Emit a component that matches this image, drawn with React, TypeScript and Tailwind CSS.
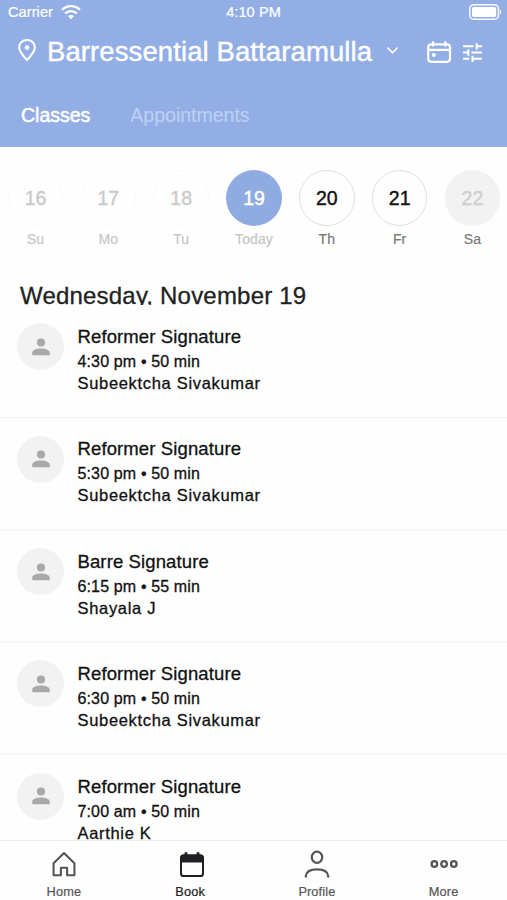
import React from "react";
import { MdTune } from "react-icons/md";

type Day = { num: string; label: string; circle: string; text: string };

const days: Day[] = [
  { num: "16", label: "Su", circle: "border border-[#fafafa] text-[#c9c9c9]", text: "text-[#c6c6c6]" },
  { num: "17", label: "Mo", circle: "border border-[#fafafa] text-[#c9c9c9]", text: "text-[#c6c6c6]" },
  { num: "18", label: "Tu", circle: "border border-[#fafafa] text-[#c9c9c9]", text: "text-[#c6c6c6]" },
  { num: "19", label: "Today", circle: "bg-[#8fabe2] text-white", text: "text-[#c6c6c6]" },
  { num: "20", label: "Th", circle: "border border-[#dedde6] text-[#111]", text: "text-[#777]" },
  { num: "21", label: "Fr", circle: "border border-[#dedde6] text-[#111]", text: "text-[#777]" },
  { num: "22", label: "Sa", circle: "bg-[#f2f2f2] text-[#cfcfcf]", text: "text-[#777]" },
];

const classes = [
  { name: "Reformer Signature", time: "4:30 pm • 50 min", who: "Subeektcha Sivakumar" },
  { name: "Reformer Signature", time: "5:30 pm • 50 min", who: "Subeektcha Sivakumar" },
  { name: "Barre Signature", time: "6:15 pm • 55 min", who: "Shayala J" },
  { name: "Reformer Signature", time: "6:30 pm • 50 min", who: "Subeektcha Sivakumar" },
  { name: "Reformer Signature", time: "7:00 am • 50 min", who: "Aarthie K" },
];

function StatusBar() {
  return (
    <div className="grid h-6 grid-cols-3 items-center pl-2 pr-[5px] text-[14.5px] leading-6 [-webkit-text-stroke:0.2px]">
      <div className="flex items-center gap-2">
        <span className="tracking-[0.1px]">Carrier</span>
        <svg width="20" height="16" viewBox="0 0 20 16" fill="none" stroke="white" strokeWidth="2.3">
          <path d="M1 5.8C6 0.9 14 0.9 19 5.8" />
          <path d="M4.2 9.4C7.4 6.3 12.6 6.3 15.8 9.4" />
          <path d="M10 15.2L6.9 12.1C8.6 10.6 11.4 10.6 13.1 12.1Z" fill="white" stroke="none" />
        </svg>
      </div>
      <span className="-ml-[3px] text-center tracking-[0.1px]">4:10 PM</span>
      <svg className="justify-self-end" width="33" height="16" viewBox="0 0 33 16">
        <rect x="0.8" y="0.8" width="28.6" height="14.4" rx="3.8" fill="none" stroke="white" strokeWidth="1.4" />
        <rect x="3" y="3" width="24.2" height="10" rx="1.8" fill="white" />
        <path d="M30.8 5.2C32.6 6 32.6 10 30.8 10.8Z" fill="white" />
      </svg>
    </div>
  );
}

function Header() {
  return (
    <header className="h-[147px] shrink-0 bg-[#92aee5] text-white">
      <StatusBar />
      <div className="flex h-14 items-center pl-[17px] pr-[24.6px]">
        <svg className="-mt-1 shrink-0" width="20" height="24" viewBox="0 0 20 24" fill="none" stroke="white" strokeWidth="2.1">
          <path d="M10 22C6.5 18.3 2.2 13.6 2.2 9.4C2.2 5.1 5.6 2 10 2S17.8 5.1 17.8 9.4C17.8 13.6 13.5 18.3 10 22Z" strokeLinejoin="round" />
          <circle cx="10" cy="9.6" r="2.3" fill="white" stroke="none" />
        </svg>
        <h1 className="ml-[10px] whitespace-nowrap text-[27.5px] leading-[56px] tracking-[0.1px] [-webkit-text-stroke:0.4px]">
          Barressential Battaramulla
        </h1>
        <svg className="ml-[14px] -mt-1 shrink-0" width="13" height="9" viewBox="0 0 13 9" fill="none" stroke="white" strokeWidth="1.6" strokeLinecap="round" strokeLinejoin="round">
          <path d="M1.8 2L6.5 6.7L11.2 2" />
        </svg>
        <div className="ml-auto flex items-center gap-[11.5px]">
          <svg width="26" height="24" viewBox="0 0 26 24" fill="none" stroke="white" strokeWidth="2.2">
            <rect x="2.2" y="4.4" width="21.8" height="17.4" rx="3" />
            <path d="M2.2 9.8H24M7 1.2V6.6M19.4 1.2V6.6" />
            <circle cx="7.8" cy="14.9" r="2" fill="white" stroke="none" />
          </svg>
          <MdTune className="-mx-[3px] size-[25px]" />
        </div>
      </div>
      <nav className="flex h-[67px] items-center gap-10 pl-[21px] pt-[5px] text-[19.5px]">
        <span className="[-webkit-text-stroke:0.5px]">Classes</span>
        <span className="text-[#bccff3] [-webkit-text-stroke:0.2px]">Appointments</span>
      </nav>
    </header>
  );
}

function DayStrip() {
  return (
    <div className="flex justify-between pl-2 pr-[7px] pt-[23px]">
      {days.map((d) => (
        <div key={d.num} className="flex w-[55px] flex-col items-center gap-[4px]">
          <div className={`flex size-[55.5px] items-center justify-center rounded-full pt-[1px] text-[19.5px] [-webkit-text-stroke:0.4px] ${d.circle}`}>
            {d.num}
          </div>
          <span className={`text-[14px] leading-[18px] tracking-[0.1px] [-webkit-text-stroke:0.2px] ${d.text}`}>{d.label}</span>
        </div>
      ))}
    </div>
  );
}

function ClassList() {
  return (
    <div className="min-h-0 flex-1 overflow-hidden">
      {classes.map((c, i) => (
        <div key={i} className="flex h-[112.4px] border-b border-[#f5f5f5] pl-[17px] text-[#111]">
          <div className="mt-[17.5px] flex size-[47px] items-center justify-center rounded-full bg-[#f2f2f2]">
            <svg width="18" height="18" viewBox="0 0 18 18" fill="#a9a9a9">
              <circle cx="9" cy="4.5" r="4.1" />
              <path d="M0.2 17.2V14.8C0.2 12 5 10.6 9 10.6S17.8 12 17.8 14.8V17.2Z" />
            </svg>
          </div>
          <div className="ml-[13.5px] whitespace-nowrap pt-[18.2px] [-webkit-text-stroke:0.3px]">
            <div className="mb-[2px] text-[18.5px] leading-[25px] tracking-[0.12px]">{c.name}</div>
            <div className="text-[16px] leading-[22px] tracking-[0.14px]">{c.time}</div>
            <div className="-mt-[1px] text-[16.5px] leading-[22px] tracking-[0.68px]">{c.who}</div>
          </div>
        </div>
      ))}
    </div>
  );
}

function TabBar() {
  return (
    <nav className="grid h-[60px] shrink-0 grid-cols-4 border-t border-[#eeeeee] pt-[9px] text-[12.8px] leading-[18px] tracking-[0.1px] text-[#555] [-webkit-text-stroke:0.2px]">
      <div className="flex flex-col items-center gap-[5px] pl-[1px]">
        <svg width="28" height="28" viewBox="0 0 28 28" fill="none" stroke="#55565a" strokeWidth="2.1" strokeLinejoin="round">
          <path d="M14 3L3.6 13.2V25.2H10.9V17.8H17.1V25.2H24.4V13.2Z" />
        </svg>
        <span>Home</span>
      </div>
      <div className="flex flex-col items-center gap-[5px] text-[#222]">
        <svg className="ml-[3px]" width="28" height="28" viewBox="0 0 28 28">
          <rect x="3" y="5.5" width="22" height="20.5" rx="2.6" fill="none" stroke="#202024" strokeWidth="2" />
          <path d="M2.5 12.6V7A2.4 2.4 0 0 1 4.9 4.6H6.6V2.3H9.4V4.6H18.6V2.3H21.4V4.6H23.1A2.4 2.4 0 0 1 25.5 7V12.6Z" fill="#202024" />
        </svg>
        <span>Book</span>
      </div>
      <div className="flex flex-col items-center gap-[5px]">
        <svg width="28" height="28" viewBox="0 0 28 28" fill="none" stroke="#55565a" strokeWidth="2.2">
          <ellipse cx="14" cy="7.2" rx="5.2" ry="5.6" />
          <path d="M2.8 27.4V25.8C3.4 21.4 8 19.3 14 19.3S24.6 21.4 25.2 25.8V27.4" />
        </svg>
        <span>Profile</span>
      </div>
      <div className="flex flex-col items-center gap-[5px]">
        <svg width="28" height="28" viewBox="0 0 28 28" fill="none" stroke="#55565a" strokeWidth="2.3">
          <circle cx="4.4" cy="14" r="2.8" />
          <circle cx="14.1" cy="14" r="2.8" />
          <circle cx="23.8" cy="14" r="2.8" />
        </svg>
        <span>More</span>
      </div>
    </nav>
  );
}

export default function App() {
  return (
    <div className="flex h-[900px] w-[507px] flex-col overflow-hidden bg-[#fefefe] font-['Liberation_Sans',Arial,sans-serif]">
      <Header />
      <DayStrip />
      <h2 className="mb-[1px] mt-[34.5px] h-[22.8px] shrink-0 overflow-hidden whitespace-nowrap pl-5 text-[24px] leading-[28px] tracking-[0.2px] text-[#222] [-webkit-text-stroke:0.3px]">
        Wednesday, November 19
      </h2>
      <ClassList />
      <TabBar />
    </div>
  );
}
